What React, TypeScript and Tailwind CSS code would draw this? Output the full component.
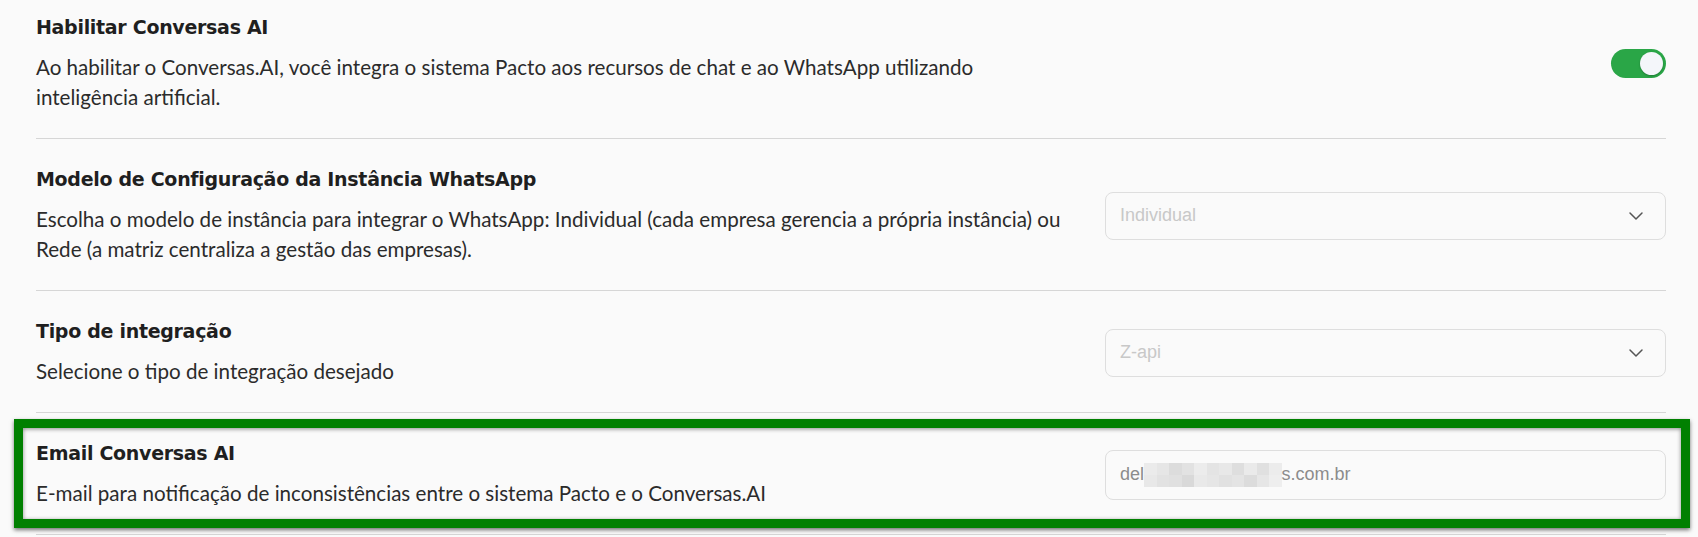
import { ChevronDown } from "lucide-react"

const titleFont = { fontFamily: '"DejaVu Sans", "Open Sans", sans-serif' }
const fieldFont = { fontFamily: '"Liberation Sans", sans-serif' }

function Title({ children }: { children: React.ReactNode }) {
  return (
    <h3 className="text-[19px] leading-[24px] font-bold text-[#1f1f1f] tracking-[-0.3px]" style={titleFont}>
      {children}
    </h3>
  )
}

function Desc({ children }: { children: React.ReactNode }) {
  return <p className="mt-[13px] text-[20.6px] leading-[30px] text-[#2b2b2b]">{children}</p>
}

function SelectBox({ value }: { value: string }) {
  return (
    <div className="w-full h-[48px] rounded-lg border border-[#dedede] bg-[#fafafa] flex items-center justify-between pl-[14px] pr-[17px]">
      <span className="text-[18px] text-[#c8c8c8]" style={fieldFont}>
        {value}
      </span>
      <ChevronDown size={24} strokeWidth={1.5} className="text-[#555]" />
    </div>
  )
}

function Toggle() {
  return (
    <div className="w-[55px] h-[29px] rounded-full bg-[#2aa647] flex items-center justify-end px-[3px]">
      <div className="w-[23px] h-[23px] rounded-full bg-[#f4f6fa] shadow-[0_1px_2px_rgba(0,0,0,0.25)]" />
    </div>
  )
}

const mosaic = [
  ["#ebebeb", "#e6e6e6", "#dcdcdc", "#e2e2e2", "#ececec", "#e4e4e4", "#e8e8e8", "#dedede", "#eaeaea", "#e0e0e0", "#ececec"],
  ["#e8e8e8", "#e2e2e2", "#e0e0e0", "#d9d9d9", "#e9e9e9", "#e6e6e6", "#e1e1e1", "#e4e4e4", "#dcdcdc", "#e6e6e6", "#eeeeee"],
]

function EmailInput() {
  return (
    <div className="w-full h-[50px] rounded-lg border border-[#dedede] bg-[#fafafa] flex items-center pl-[14px]">
      <span className="text-[18px] text-[#8c8c8c]" style={fieldFont}>
        del
      </span>
      <div className="flex flex-col">
        {mosaic.map((row, i) => (
          <div key={i} className="flex">
            {row.map((c, j) => (
              <div key={j} className="w-[12.5px] h-[12px]" style={{ background: c }} />
            ))}
          </div>
        ))}
      </div>
      <span className="text-[18px] text-[#8c8c8c]" style={fieldFont}>
        s.com.br
      </span>
    </div>
  )
}

export default function App() {
  return (
    <div
      className="min-h-[537px] w-full bg-[#fafafa] overflow-hidden pl-[36px] pr-[32px]"
      style={{ fontFamily: 'Lato, "Noto Sans", sans-serif' }}
    >
      <div className="-mt-[13px] flex items-center gap-[34px] border-b border-[#d6d6d6] pt-[28px] pb-[26px]">
        <div className="flex-1">
          <Title>Habilitar Conversas AI</Title>
          <Desc>
            Ao habilitar o Conversas.AI, você integra o sistema Pacto aos recursos de chat e ao WhatsApp utilizando
            inteligência artificial.
          </Desc>
        </div>
        <div className="w-[561px] flex justify-end">
          <Toggle />
        </div>
      </div>

      <div className="flex items-center gap-[34px] border-b border-[#d6d6d6] pt-[28px] pb-[26px]">
        <div className="flex-1">
          <Title>Modelo de Configuração da Instância WhatsApp</Title>
          <Desc>
            Escolha o modelo de instância para integrar o WhatsApp: Individual (cada empresa gerencia a própria
            instância) ou Rede (a matriz centraliza a gestão das empresas).
          </Desc>
        </div>
        <div className="w-[561px]">
          <SelectBox value="Individual" />
        </div>
      </div>

      <div className="flex items-center gap-[34px] border-b border-[#d6d6d6] pt-[28px] pb-[26px]">
        <div className="flex-1">
          <Title>Tipo de integração</Title>
          <Desc>Selecione o tipo de integração desejado</Desc>
        </div>
        <div className="w-[561px]">
          <SelectBox value="Z-api" />
        </div>
      </div>

      <div className="relative flex items-center gap-[34px] border-b border-[#d6d6d6] pt-[28px] pb-[26px]">
        <div className="flex-1">
          <Title>Email Conversas AI</Title>
          <Desc>E-mail para notificação de inconsistências entre o sistema Pacto e o Conversas.AI</Desc>
        </div>
        <div className="w-[561px]">
          <EmailInput />
        </div>
        {/* destaque verde da captura */}
        <div className="pointer-events-none absolute -left-[22px] -right-[24px] top-[6px] bottom-[6px] border-[9px] border-[#018001] shadow-[0_2px_4px_rgba(0,0,0,0.55),inset_0_1px_4px_rgba(0,0,0,0.45)]" />
      </div>
    </div>
  )
}
